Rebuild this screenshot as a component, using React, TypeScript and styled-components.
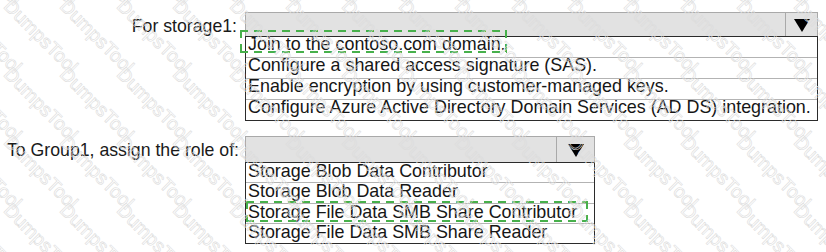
import React from 'react';
import styled, { createGlobalStyle } from 'styled-components';

const GlobalStyle = createGlobalStyle`
  html, body {
    margin: 0;
    background: #fff;
  }
  body {
    font-family: "Liberation Sans", Arial, sans-serif;
    color: #1a1a1a;
  }
`;

const Page = styled.div`
  position: relative;
  width: 826px;
  height: 252px;
  box-sizing: border-box;
  padding: 12px 0 0 7px;
  display: flex;
  flex-direction: column;
  gap: 15px;
  overflow: hidden;
`;

const Section = styled.div`
  display: grid;
  grid-template-columns: 230px auto;
  column-gap: 8px;
  align-items: start;
`;

const Label = styled.div`
  font-size: 17.7px;
  line-height: 20px;
  margin-top: 3.7px;
  text-align: right;
  white-space: nowrap;
`;

const Dropdown = styled.div<{ $width: number }>`
  width: ${(p) => p.$width}px;
`;

const Header = styled.div<{ $height: number }>`
  display: flex;
  height: ${(p) => p.$height}px;
  box-sizing: border-box;
  border: 1px solid #a9a9a9;
  border-bottom: none;
  background: #e2e2e2;
`;

const HeaderValue = styled.div`
  flex: 1;
`;

const ArrowCell = styled.div<{ $width: number }>`
  width: ${(p) => p.$width}px;
  border-left: 1px solid #a9a9a9;
  display: flex;
  align-items: center;
  justify-content: center;
  padding-top: 2px;
`;

const List = styled.ul`
  margin: 0;
  padding: 0;
  list-style: none;
  border: 1.5px solid #2b2b2b;
  background: #fff;
`;

const Option = styled.li<{ $height: number; $lineHeight: number }>`
  position: relative;
  height: ${(p) => p.$height}px;
  line-height: ${(p) => p.$lineHeight}px;
  padding-left: 2px;
  font-size: 17.9px;
  white-space: nowrap;
  color: #161616;
  & + & {
    border-top: 1px solid #b3b3b3;
  }
`;

const Picked = styled.span`
  position: relative;
  display: inline-block;
`;

const dash = (dir: string) =>
  `repeating-linear-gradient(${dir}, #47b04b 0 8px, transparent 8px 14px)`;

const DashedBox = styled.span<{ $top: number; $left: number; $right: number; $bottom: number }>`
  position: absolute;
  top: ${(p) => p.$top}px;
  left: ${(p) => p.$left}px;
  right: ${(p) => p.$right}px;
  bottom: ${(p) => p.$bottom}px;
  background:
    ${dash('90deg')} top left / 100% 2px no-repeat,
    ${dash('90deg')} bottom left / 100% 2px no-repeat,
    ${dash('180deg')} top left / 2px 100% no-repeat,
    ${dash('180deg')} top right / 2px 100% no-repeat;
  pointer-events: none;
`;

const Watermark = styled.div`
  position: absolute;
  inset: 0;
  overflow: hidden;
  pointer-events: none;
  z-index: 2;
`;

const Mark = styled.span`
  position: absolute;
  font-size: 19px;
  line-height: 19px;
  white-space: nowrap;
  color: transparent;
  -webkit-text-stroke: 0.6px #dcdcdc;
  transform: rotate(45deg);
  transform-origin: 0 0;
`;

const Arrow = () => (
  <svg width="16" height="13" viewBox="0 0 16 13">
    <polygon points="0,0 16,0 8,13" fill="#000" />
  </svg>
);

type Box = { top: number; left: number; right: number; bottom: number };

type Choice = { text: string; box?: Box };

const storageChoices: Choice[] = [
  { text: 'Join to the contoso.com domain.', box: { top: -6.8, left: -8.5, right: -1, bottom: -1.5 } },
  { text: 'Configure a shared access signature (SAS).' },
  { text: 'Enable encryption by using customer-managed keys.' },
  { text: 'Configure Azure Active Directory Domain Services (AD DS) integration.' },
];

const roleChoices: Choice[] = [
  { text: 'Storage Blob Data Contributor' },
  { text: 'Storage Blob Data Reader' },
  { text: 'Storage File Data SMB Share Contributor', box: { top: -3, left: -2, right: -11, bottom: -2 } },
  { text: 'Storage File Data SMB Share Reader' },
];

type SelectProps = {
  width: number;
  headerHeight: number;
  arrowWidth: number;
  rowHeight: number;
  lineHeight: number;
  choices: Choice[];
};

const Select = ({ width, headerHeight, arrowWidth, rowHeight, lineHeight, choices }: SelectProps) => (
  <Dropdown $width={width}>
    <Header $height={headerHeight}>
      <HeaderValue />
      <ArrowCell $width={arrowWidth}>
        <Arrow />
      </ArrowCell>
    </Header>
    <List>
      {choices.map((c) => (
        <Option key={c.text} $height={rowHeight} $lineHeight={lineHeight}>
          {c.box ? (
            <Picked>
              {c.text}
              <DashedBox $top={c.box.top} $left={c.box.left} $right={c.box.right} $bottom={c.box.bottom} />
            </Picked>
          ) : (
            c.text
          )}
        </Option>
      ))}
    </List>
  </Dropdown>
);

// faint "DumpsTool" watermark tiled across the shot
const marks: { x: number; y: number }[] = [];
for (let r = -1; r < 5; r++) {
  for (let c = -2; c < 16; c++) {
    marks.push({ x: 14 + c * 56.4, y: -4 + r * 68 });
  }
}

const App = () => {
  return (
    <>
      <GlobalStyle />
      <Page>
        <Section>
          <Label>For storage1:</Label>
          <Select width={573} headerHeight={24} arrowWidth={31} rowHeight={20} lineHeight={14} choices={storageChoices} />
        </Section>
        <Section>
          <Label>To Group1, assign the role of:</Label>
          <Select width={350} headerHeight={26} arrowWidth={37} rowHeight={19.25} lineHeight={16} choices={roleChoices} />
        </Section>
        <Watermark>
          {marks.map((m) => (
            <Mark key={`${m.x}-${m.y}`} style={{ left: m.x, top: m.y }}>
              DumpsTool
            </Mark>
          ))}
        </Watermark>
      </Page>
    </>
  );
};

export default App;
